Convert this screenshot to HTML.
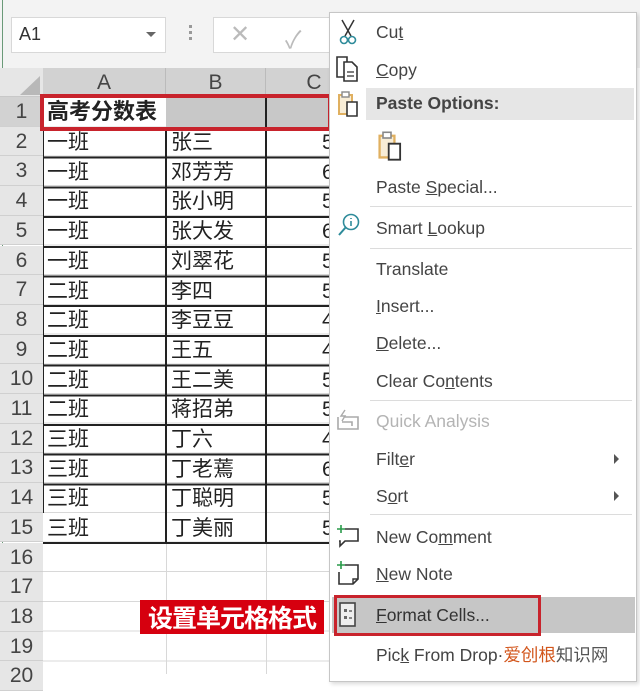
<!DOCTYPE html>
<html><head><meta charset="utf-8"><style>
*{margin:0;padding:0;box-sizing:border-box}
body{width:640px;height:674px;overflow:hidden;background:#fff;position:relative;font-family:"Liberation Sans","Noto Sans CJK SC",sans-serif}
.a{position:absolute}
.rh{position:absolute;left:0;width:43px;background:#e6e6e6;color:#444;font-size:21px;text-align:center;border-bottom:1px solid #d0d0d0}
.cell{position:absolute;font-size:21px;color:#222;font-family:"Liberation Sans","Noto Sans CJK SC",sans-serif;line-height:29px;padding-left:4px;overflow:hidden;white-space:nowrap}
.mi{position:absolute;left:376px;font-size:17.5px;color:#444;font-family:"Liberation Sans","Noto Sans CJK SC",sans-serif}
.sep{position:absolute;left:370px;width:262px;height:1px;background:#dcdcdc}
u{text-decoration:underline}
</style></head><body>
<div class="a" style="left:0;top:0;width:640px;height:68px;background:#f3f3f3"></div>
<div class="a" style="left:2px;top:0;width:1px;height:674px;background:#6a9a78"></div>
<div class="a" style="left:11px;top:17px;width:155px;height:36px;background:#fff;border:1px solid #d8d8d8"></div>
<div class="a" style="left:19px;top:24px;font-size:18px;color:#333">A1</div>
<div class="a" style="left:146px;top:32px;width:0;height:0;border-left:5px solid transparent;border-right:5px solid transparent;border-top:5px solid #666"></div>
<div class="a" style="left:189px;top:25px;width:3px;height:3px;background:#999;box-shadow:0 6px 0 #999,0 12px 0 #999"></div>
<div class="a" style="left:213px;top:17px;width:120px;height:36px;background:#fff;border:1px solid #d8d8d8"></div>
<div class="a" style="left:230px;top:20px;font-size:24px;color:#bbb">✕</div>
<div class="a" style="left:285px;top:20px;font-size:24px;color:#bbb">✓</div>
<div class="a" style="left:0;top:68px;width:330px;height:29px;background:#e6e6e6;border-bottom:1px solid #c8c8c8"></div>
<div class="a" style="left:20px;top:76px;width:0;height:0;border-left:20px solid transparent;border-bottom:19px solid #b8b8b8"></div>
<div class="a" style="left:43px;top:68px;width:123px;height:29px;background:#d2d2d2;color:#444;font-size:21px;text-align:center;line-height:29px;border-right:1px solid #bbb">A</div>
<div class="a" style="left:166px;top:68px;width:100px;height:29px;background:#d2d2d2;color:#444;font-size:21px;text-align:center;line-height:29px;border-right:1px solid #bbb">B</div>
<div class="a" style="left:266px;top:68px;width:64px;height:29px;background:#d2d2d2;color:#444;font-size:21px;text-align:center;line-height:29px;padding-left:32px">C</div>
<div class="a" style="left:43px;top:97px;width:290px;height:577px;background:
repeating-linear-gradient(to bottom,transparent 0,transparent 28.7px,#d8d8d8 28.7px,#d8d8d8 29.7px)"></div>
<div class="a" style="left:166px;top:97px;width:1px;height:577px;background:#d8d8d8"></div>
<div class="a" style="left:266px;top:97px;width:1px;height:577px;background:#d8d8d8"></div>
<div class="rh" style="top:97px;height:29.7px;line-height:29px;background:#d2d2d2">1</div>
<div class="rh" style="top:126.7px;height:29.7px;line-height:29px">2</div>
<div class="rh" style="top:156.4px;height:29.7px;line-height:29px">3</div>
<div class="rh" style="top:186.1px;height:29.7px;line-height:29px">4</div>
<div class="rh" style="top:215.8px;height:29.7px;line-height:29px">5</div>
<div class="rh" style="top:245.5px;height:29.7px;line-height:29px">6</div>
<div class="rh" style="top:275.2px;height:29.7px;line-height:29px">7</div>
<div class="rh" style="top:304.9px;height:29.7px;line-height:29px">8</div>
<div class="rh" style="top:334.6px;height:29.7px;line-height:29px">9</div>
<div class="rh" style="top:364.3px;height:29.7px;line-height:29px">10</div>
<div class="rh" style="top:394px;height:29.7px;line-height:29px">11</div>
<div class="rh" style="top:423.7px;height:29.7px;line-height:29px">12</div>
<div class="rh" style="top:453.4px;height:29.7px;line-height:29px">13</div>
<div class="rh" style="top:483.1px;height:29.7px;line-height:29px">14</div>
<div class="rh" style="top:512.8px;height:29.7px;line-height:29px">15</div>
<div class="rh" style="top:542.5px;height:29.7px;line-height:29px">16</div>
<div class="rh" style="top:572.2px;height:29.7px;line-height:29px">17</div>
<div class="rh" style="top:601.9px;height:29.7px;line-height:29px">18</div>
<div class="rh" style="top:631.6px;height:29.7px;line-height:29px">19</div>
<div class="rh" style="top:661.3px;height:29.7px;line-height:29px">20</div>
<div class="a" style="left:166px;top:97px;width:164px;height:30px;background:#c8c8c8"></div>
<div class="a" style="left:265px;top:97px;width:2px;height:30px;background:#222"></div>
<div class="cell" style="left:43px;top:97px;width:123px;font-weight:bold;background:#fff;font-size:22px">高考分数表</div>
<div class="a" style="left:43px;top:126.7px;width:290px;height:386.1px;border-top:2px solid #222;border-left:1px solid #222;background:repeating-linear-gradient(to bottom,transparent 0,transparent 27.7px,#222 27.7px,#222 29.7px)"></div>
<div class="a" style="left:43px;top:541.5px;width:290px;height:2px;background:#222"></div>
<div class="a" style="left:165px;top:126.7px;width:2px;height:416px;background:#222"></div>
<div class="a" style="left:265px;top:126.7px;width:2px;height:416px;background:#222"></div>
<div class="cell" style="left:43px;top:128px">一班</div><div class="cell" style="left:167px;top:128px">张三</div><div class="cell" style="left:318px;top:128px">5</div>
<div class="cell" style="left:43px;top:157.7px">一班</div><div class="cell" style="left:167px;top:157.7px">邓芳芳</div><div class="cell" style="left:318px;top:157.7px">6</div>
<div class="cell" style="left:43px;top:187.4px">一班</div><div class="cell" style="left:167px;top:187.4px">张小明</div><div class="cell" style="left:318px;top:187.4px">5</div>
<div class="cell" style="left:43px;top:217.1px">一班</div><div class="cell" style="left:167px;top:217.1px">张大发</div><div class="cell" style="left:318px;top:217.1px">6</div>
<div class="cell" style="left:43px;top:246.8px">一班</div><div class="cell" style="left:167px;top:246.8px">刘翠花</div><div class="cell" style="left:318px;top:246.8px">5</div>
<div class="cell" style="left:43px;top:276.5px">二班</div><div class="cell" style="left:167px;top:276.5px">李四</div><div class="cell" style="left:318px;top:276.5px">5</div>
<div class="cell" style="left:43px;top:306.2px">二班</div><div class="cell" style="left:167px;top:306.2px">李豆豆</div><div class="cell" style="left:318px;top:306.2px">4</div>
<div class="cell" style="left:43px;top:335.9px">二班</div><div class="cell" style="left:167px;top:335.9px">王五</div><div class="cell" style="left:318px;top:335.9px">4</div>
<div class="cell" style="left:43px;top:365.6px">二班</div><div class="cell" style="left:167px;top:365.6px">王二美</div><div class="cell" style="left:318px;top:365.6px">5</div>
<div class="cell" style="left:43px;top:395.3px">二班</div><div class="cell" style="left:167px;top:395.3px">蒋招弟</div><div class="cell" style="left:318px;top:395.3px">5</div>
<div class="cell" style="left:43px;top:425px">三班</div><div class="cell" style="left:167px;top:425px">丁六</div><div class="cell" style="left:318px;top:425px">4</div>
<div class="cell" style="left:43px;top:454.7px">三班</div><div class="cell" style="left:167px;top:454.7px">丁老蔫</div><div class="cell" style="left:318px;top:454.7px">6</div>
<div class="cell" style="left:43px;top:484.4px">三班</div><div class="cell" style="left:167px;top:484.4px">丁聪明</div><div class="cell" style="left:318px;top:484.4px">5</div>
<div class="cell" style="left:43px;top:514.1px">三班</div><div class="cell" style="left:167px;top:514.1px">丁美丽</div><div class="cell" style="left:318px;top:514.1px">5</div>
<div class="a" style="left:40px;top:94px;width:292px;height:37px;border:4px solid #c8232c"></div>
<div class="a" style="left:140px;top:600px;width:184px;height:34px;background:#d6000f;color:#fff;font-weight:bold;font-size:25px;line-height:34px;text-align:center;letter-spacing:-1px;font-family:'Noto Sans CJK SC',sans-serif">设置单元格格式</div>
<div class="a" style="left:329px;top:12px;width:308px;height:670px;background:#fff;border:1px solid #c6c6c6;box-shadow:2px 2px 4px rgba(0,0,0,.15)"></div>
<div class="a" style="left:366px;top:88px;width:268px;height:32px;background:#e6e6e6"></div>
<div class="a" style="left:332px;top:597px;width:303px;height:36px;background:#c6c6c6"></div>
<div class="a" style="left:334px;top:595px;width:207px;height:41px;border:3px solid #c8232c"></div>
<svg class="a" style="left:336px;top:18px" width="24" height="28" viewBox="0 0 24 28"><path d="M6 2 L15 18 M18 2 L9 18" stroke="#333" stroke-width="1.5" fill="none"/><circle cx="8" cy="22" r="3.5" stroke="#2e8b9a" stroke-width="1.6" fill="none"/><circle cx="16" cy="22" r="3.5" stroke="#2e8b9a" stroke-width="1.6" fill="none"/></svg>
<svg class="a" style="left:335px;top:55px" width="26" height="28" viewBox="0 0 26 28"><path d="M2 2 H12 V22 H2 Z" stroke="#333" stroke-width="1.6" fill="#fff"/><path d="M9 7 H17 L22 12 V26 H9 Z" stroke="#333" stroke-width="1.6" fill="#fff"/><path d="M12 17 H19 M12 21 H19" stroke="#333" stroke-width="1.3"/></svg>
<svg class="a" style="left:337px;top:90px" width="24" height="28" viewBox="0 0 24 28"><path d="M2 5 H15 V24 H2 Z" stroke="#e0b060" stroke-width="2" fill="#f8edd6"/><rect x="5" y="2" width="7" height="5" fill="#fff" stroke="#888" stroke-width="1.4"/><path d="M10 12 H20 V26 H10 Z" stroke="#333" stroke-width="1.6" fill="#fff"/></svg>
<svg class="a" style="left:377px;top:130px" width="28" height="32" viewBox="0 0 24 28"><path d="M2 5 H15 V24 H2 Z" stroke="#e0b060" stroke-width="2" fill="#f8edd6"/><rect x="5" y="2" width="7" height="5" fill="#fff" stroke="#888" stroke-width="1.4"/><path d="M10 12 H20 V26 H10 Z" stroke="#333" stroke-width="1.6" fill="#fff"/></svg>
<svg class="a" style="left:336px;top:212px" width="26" height="26" viewBox="0 0 26 26"><circle cx="15" cy="10" r="7.5" stroke="#2e8b9a" stroke-width="1.6" fill="none"/><path d="M10 15 L3 23" stroke="#2e8b9a" stroke-width="2"/><path d="M15 9 V14 M15 6 V7" stroke="#2e8b9a" stroke-width="1.6"/></svg>
<svg class="a" style="left:335px;top:407px" width="26" height="26" viewBox="0 0 26 26"><path d="M3 10 V22 H23 V10 H10" stroke="#aaa" stroke-width="1.6" fill="none"/><path d="M7 15 H17 V19" stroke="#aaa" stroke-width="1.6" fill="none"/><path d="M10 3 L6 9 H10 L7 14" stroke="#aaa" stroke-width="1.4" fill="none"/></svg>
<svg class="a" style="left:335px;top:523px" width="26" height="26" viewBox="0 0 26 26"><path d="M10 6 H23 V18 H10 L5 23 V18 H4" stroke="#333" stroke-width="1.6" fill="none"/><path d="M6 2 V10 M2 6 H10" stroke="#2a9a4a" stroke-width="1.6"/></svg>
<svg class="a" style="left:335px;top:560px" width="26" height="28" viewBox="0 0 26 28"><path d="M10 5 H23 V19 L18 24 H4 V12" stroke="#333" stroke-width="1.6" fill="none"/><path d="M23 19 H18 V24" stroke="#333" stroke-width="1.4" fill="none"/><path d="M6 1 V9 M2 5 H10" stroke="#2a9a4a" stroke-width="1.6"/></svg>
<svg class="a" style="left:338px;top:601px" width="20" height="28" viewBox="0 0 20 28"><rect x="2" y="2" width="15" height="23" stroke="#444" stroke-width="1.6" fill="#eee"/><rect x="6" y="8" width="3" height="3" fill="#666"/><rect x="6" y="15" width="3" height="3" fill="#666"/><path d="M11 10 H14 M11 17 H14" stroke="#666" stroke-width="1.4"/></svg>
<div class="mi" style="top:22px">Cu<u>t</u></div>
<div class="mi" style="top:60px"><u>C</u>opy</div>
<div class="mi" style="top:93px;font-weight:bold;color:#444">Paste Options:</div>
<div class="mi" style="top:177px">Paste <u>S</u>pecial...</div>
<div class="sep" style="top:206px"></div>
<div class="mi" style="top:218px">Smart <u>L</u>ookup</div>
<div class="sep" style="top:248px"></div>
<div class="mi" style="top:259px">Translate</div>
<div class="mi" style="top:296px"><u>I</u>nsert...</div>
<div class="mi" style="top:333px"><u>D</u>elete...</div>
<div class="mi" style="top:371px">Clear Co<u>n</u>tents</div>
<div class="sep" style="top:400px"></div>
<div class="mi" style="top:411px;color:#b4b4b4">Quick Analysis</div>
<div class="mi" style="top:449px">Filt<u>e</u>r</div>
<div class="mi" style="top:486px">S<u>o</u>rt</div>
<div class="a" style="left:614px;top:454px;width:0;height:0;border-top:5px solid transparent;border-bottom:5px solid transparent;border-left:5px solid #555"></div>
<div class="a" style="left:614px;top:491px;width:0;height:0;border-top:5px solid transparent;border-bottom:5px solid transparent;border-left:5px solid #555"></div>
<div class="sep" style="top:514px"></div>
<div class="mi" style="top:527px">New Co<u>m</u>ment</div>
<div class="mi" style="top:564px"><u>N</u>ew Note</div>
<div class="mi" style="top:605px;color:#333"><u>F</u>ormat Cells...</div>
<div class="mi" style="top:642px">Pic<u>k</u> From Drop·<span style="color:#d2561c">爱创根</span><span style="color:#555">知识网</span></div>
</body></html>
